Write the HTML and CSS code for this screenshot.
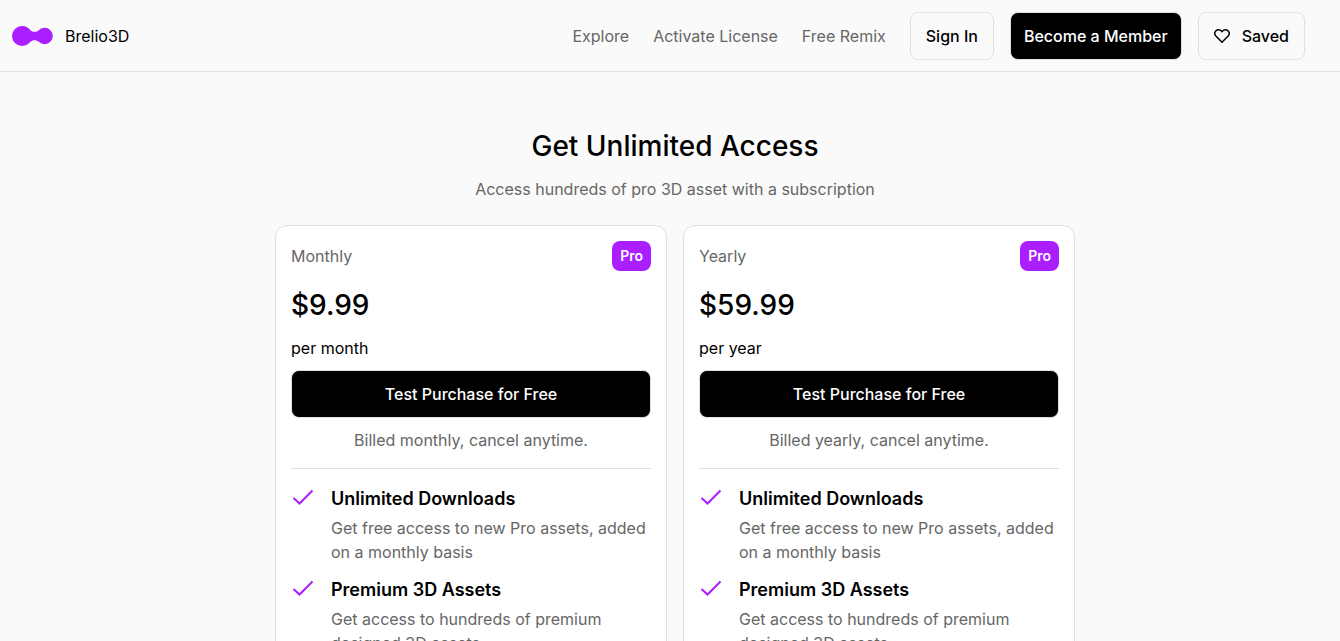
FILE: index.html
```html
<!DOCTYPE html>
<html lang="en">
<head>
  <meta charset="UTF-8">
  <meta name="viewport" content="width=device-width, initial-scale=1.0">
  <title>Brelio3D - Pricing</title>
  <link rel="stylesheet" href="styles.css">
</head>
<body>

<header class="header">
  <a href="#" class="brand">
    <svg class="logo" viewBox="0 0 41 20" aria-hidden="true">
      <path d="M10 0C14 0 16.500 2 18.500 4.200C20.500 6.400 24.500 6.400 26.800 4.200A8.200 8.200 0 1 1 26.800 15.800C24.500 13.600 20.500 13.600 18.500 15.800C16.500 18 14 20 10 20A10 10 0 0 1 10 0Z"/>
    </svg>
    <span>Brelio3D</span>
  </a>
  <nav class="nav">
    <a href="#" class="nav-link">Explore</a>
    <a href="#" class="nav-link">Activate License</a>
    <a href="#" class="nav-link">Free Remix</a>
    <div class="actions">
      <button class="btn">Sign In</button>
      <button class="btn btn-dark">Become a Member</button>
      <button class="btn">
        <svg class="heart" viewBox="0 0 16 16" aria-hidden="true">
          <path d="M8 14.300L2.100 8.300C0.500 6.600 0.500 4.200 2 2.700C3.600 1.200 6 1.300 7.300 2.900L8 3.700L8.700 2.900C10 1.300 12.400 1.200 14 2.700C15.500 4.200 15.500 6.600 13.900 8.300Z"/>
        </svg>
        Saved
      </button>
    </div>
  </nav>
</header>

<main class="pricing">
  <h1>Get Unlimited Access</h1>
  <p class="subtitle">Access hundreds of pro 3D asset with a subscription</p>

  <div class="plans">
    <section class="card">
      <div class="card-top">
        <span class="plan">Monthly</span>
        <span class="badge">Pro</span>
      </div>
      <p class="price">$9.99</p>
      <p class="period">per month</p>
      <button class="btn btn-dark">Test Purchase for Free</button>
      <p class="billing">Billed monthly, cancel anytime.</p>
      <ul class="features">
        <li>
          <svg class="check" viewBox="0 0 24 24" aria-hidden="true"><path d="M2.500 13L8.500 18.500L21.500 5.500"/></svg>
          <div>
            <h2>Unlimited Downloads</h2>
            <p>Get free access to new Pro assets, added on a monthly basis</p>
          </div>
        </li>
        <li>
          <svg class="check" viewBox="0 0 24 24" aria-hidden="true"><path d="M2.500 13L8.500 18.500L21.500 5.500"/></svg>
          <div>
            <h2>Premium 3D Assets</h2>
            <p>Get access to hundreds of premium designed 3D assets</p>
          </div>
        </li>
      </ul>
    </section>

    <section class="card">
      <div class="card-top">
        <span class="plan">Yearly</span>
        <span class="badge">Pro</span>
      </div>
      <p class="price">$59.99</p>
      <p class="period">per year</p>
      <button class="btn btn-dark">Test Purchase for Free</button>
      <p class="billing">Billed yearly, cancel anytime.</p>
      <ul class="features">
        <li>
          <svg class="check" viewBox="0 0 24 24" aria-hidden="true"><path d="M2.500 13L8.500 18.500L21.500 5.500"/></svg>
          <div>
            <h2>Unlimited Downloads</h2>
            <p>Get free access to new Pro assets, added on a monthly basis</p>
          </div>
        </li>
        <li>
          <svg class="check" viewBox="0 0 24 24" aria-hidden="true"><path d="M2.500 13L8.500 18.500L21.500 5.500"/></svg>
          <div>
            <h2>Premium 3D Assets</h2>
            <p>Get access to hundreds of premium designed 3D assets</p>
          </div>
        </li>
      </ul>
    </section>
  </div>
</main>

</body>
</html>
```
FILE: styles.css
```css
* {
  box-sizing: border-box;
}
body {
  margin: 0;
  font-family: Inter, "Liberation Sans", sans-serif;
  font-size: 16px;
  line-height: 24px;
  color: #000;
  background-color: #fafafa;
}
h1, h2, p, ul {
  margin: 0;
  padding: 0;
}
a {
  color: inherit;
  text-decoration: none;
}
.header {
  display: flex;
  justify-content: space-between;
  align-items: center;
  height: 72px;
  padding: 0 35px 0 12px;
  border-bottom: 1px solid #e0e0e0;
}
.brand {
  display: flex;
  align-items: center;
  gap: 12px;
}
.logo {
  width: 41px;
  height: 20px;
  fill: #aa1eff;
}
.nav {
  display: flex;
  align-items: center;
  gap: 24px;
}
.nav-link {
  color: #666;
}
.actions {
  display: flex;
  gap: 16px;
}
.btn {
  display: flex;
  justify-content: center;
  align-items: center;
  gap: 12px;
  height: 48px;
  padding: 0 15px;
  border: 1px solid #e0e0e0;
  border-radius: 8px;
  background-color: transparent;
  color: #000;
  font-family: inherit;
  font-size: 16px;
  font-weight: 500;
  cursor: pointer;
}
.btn-dark {
  padding: 0 13px;
  background-color: #000;
  color: #fff;
}
.heart {
  width: 16px;
  height: 16px;
  fill: none;
  stroke: #000;
  stroke-width: 1.5;
  stroke-linejoin: round;
}
.pricing {
  padding: 52px 0 40px 10px;
  text-align: center;
}
h1 {
  font-size: 28px;
  font-weight: 500;
  line-height: 45px;
}
.subtitle {
  margin-top: 8px;
  color: #666;
}
.plans {
  display: grid;
  grid-template-columns: 1fr 1fr;
  gap: 16px;
  max-width: 800px;
  margin: 24px auto 0;
  text-align: left;
}
.card {
  display: flex;
  flex-direction: column;
  padding: 15px;
  border: 1px solid #e0e0e0;
  border-radius: 12px;
  background-color: #fff;
}
.card-top {
  display: flex;
  justify-content: space-between;
  align-items: center;
}
.plan,
.billing {
  color: #666;
}
.badge {
  padding: 3px 8px;
  border-radius: 8px;
  background-color: #aa1eff;
  color: #fff;
  font-size: 14px;
  font-weight: 600;
}
.price {
  margin-top: 12px;
  font-size: 28px;
  font-weight: 500;
  line-height: 45px;
}
.period {
  margin: 8px 0 10px;
}
.billing {
  margin: 10px 0 16px;
  text-align: center;
}
.features {
  display: flex;
  flex-direction: column;
  gap: 12px;
  padding-top: 16px;
  border-top: 1px solid #e0e0e0;
  list-style: none;
}
.features li {
  display: flex;
  gap: 16px;
}
.features h2 {
  font-size: 18px;
  font-weight: 600;
  line-height: 27px;
}
.features p {
  margin-top: 4px;
  color: #666;
}
.check {
  flex: none;
  width: 24px;
  height: 24px;
  fill: none;
  stroke: #aa1eff;
  stroke-width: 2;
}
```
